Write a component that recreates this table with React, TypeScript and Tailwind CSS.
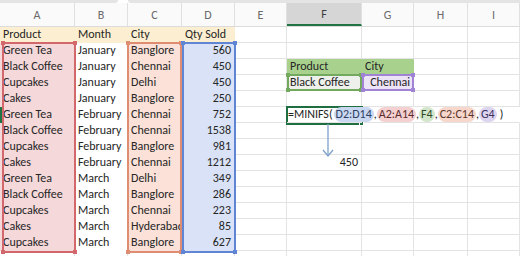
import React from 'react';

const letters = ['A', 'B', 'C', 'D', 'E', 'F', 'G', 'H', 'I'];

const data: (string | number)[][] = [
    ['Product', 'Month', 'City', 'Qty Sold'],
    ['Green Tea', 'January', 'Banglore', 560],
    ['Black Coffee', 'January', 'Chennai', 450],
    ['Cupcakes', 'January', 'Delhi', 450],
    ['Cakes', 'January', 'Banglore', 250],
    ['Green Tea', 'February', 'Chennai', 752],
    ['Black Coffee', 'February', 'Chennai', 1538],
    ['Cupcakes', 'February', 'Banglore', 981],
    ['Cakes', 'February', 'Chennai', 1212],
    ['Green Tea', 'March', 'Delhi', 349],
    ['Black Coffee', 'March', 'Banglore', 286],
    ['Cupcakes', 'March', 'Chennai', 223],
    ['Cakes', 'March', 'Hyderabad', 85],
    ['Cupcakes', 'March', 'Banglore', 627],
    ['', '', '', ''],
];

const gridCols = 'grid grid-cols-[75px_53px_54px_53px_52px_75px_52px_54px_52px]';

function cellFill(r: number, c: number) {
    if (r === 1 && c <= 3) return 'bg-[#fcefd1] border-transparent';
    if (r >= 2 && r <= 14) {
        if (c === 0) return 'bg-[#f5d8d9] border-transparent';
        if (c === 1) return 'bg-white border-transparent';
        if (c === 2) return 'bg-[#fbe1d8] border-transparent';
        if (c === 3) return 'bg-[#d9e2f6] border-transparent';
    }
    if (r === 3 && (c === 5 || c === 6)) return 'bg-[#a9d18e] border-transparent';
    if (r === 4 && c === 5) return 'bg-[#eef0ec] border-transparent';
    if (r === 4 && c === 6) return 'bg-[#ede3f6] border-transparent';
    if (r === 6 && c >= 6) return 'bg-white border-b-[#e3e3e3] border-r-transparent';
    return 'bg-white border-[#e3e3e3]';
}

function cellText(r: number, c: number): string {
    if (c <= 3) return String(data[r - 1][c]);
    if (r === 3 && c === 5) return 'Product';
    if (r === 3 && c === 6) return 'City';
    if (r === 4 && c === 5) return 'Black Coffee';
    if (r === 4 && c === 6) return 'Chennai';
    if (r === 9 && c === 5) return '450';
    return '';
}

function Pill({ children, color }: { children: React.ReactNode; color: string }) {
    return <span className={`rounded-full px-[2px] leading-[15px] ${color}`}>{children}</span>;
}

function Comma() {
    return <span className="w-[4px] text-center">,</span>;
}

function Formula() {
    return (
        <div className="relative z-20 flex items-center whitespace-nowrap text-[12px] leading-[15px] text-[#262626]">
            <span className="pr-[1px]">=MINIFS(</span>
            <Pill color="bg-[#c9d7f1] text-[#2f3f63]">D2:D14</Pill>
            <Comma />
            <Pill color="bg-[#f5d0d0] text-[#5a2b2b]">A2:A14</Pill>
            <Comma />
            <Pill color="bg-[#d3e6cc] text-[#2f4a2a]">F4</Pill>
            <Comma />
            <Pill color="bg-[#f7d6cb] text-[#5a352b]">C2:C14</Pill>
            <Comma />
            <Pill color="bg-[#ddd5f0] text-[#3c3160]">G4</Pill>
            <span className="pl-[3px]">)</span>
        </div>
    );
}

function Range({ box, color }: { box: string; color: string }) {
    return (
        <div className={`absolute pointer-events-none border-2 ${box} ${color}`}>
            <span className="absolute -left-[3px] -top-[3px] w-1 h-1 bg-current" />
            <span className="absolute -right-[3px] -top-[3px] w-1 h-1 bg-current" />
            <span className="absolute -left-[3px] -bottom-[3px] w-1 h-1 bg-current" />
            <span className="absolute -right-[3px] -bottom-[3px] w-1 h-1 bg-current" />
        </div>
    );
}

export default function App() {
    return (
        <div
            className="relative w-[520px] h-[256px] overflow-hidden bg-white"
            style={{ fontFamily: 'Carlito, Calibri, Lato, "Liberation Sans", sans-serif' }}
        >
            {/* bottoms of name box and formula bar */}
            <div className="flex h-[3px] gap-[10px]">
                <div className="w-[118px] bg-[#e4e4e4] rounded-br-[3px]" />
                <div className="flex-1 bg-[#e4e4e4] rounded-bl-[3px]" />
            </div>

            {/* column headers */}
            <div className={`${gridCols} h-6 bg-[#fafafa] border-b border-[#dcdcdc]`}>
                {letters.map((l, i) => (
                    <div
                        key={l}
                        className={`flex items-center justify-center text-[12px] border-r border-[#e0e0e0] ${
                            i === 5 ? 'bg-[#d6d6d6] text-[#3d3d3d] border-b-2 border-b-[#217346]' : 'text-[#6a6a6a]'
                        }`}
                    >
                        {l}
                    </div>
                ))}
            </div>

            {/* cells */}
            {data.map((_, ri) => {
                const r = ri + 1;
                return (
                    <div key={r} className={gridCols}>
                        {letters.map((_, c) => {
                            const right = (c === 3 && r >= 2) || (r === 9 && c === 5) || (r === 4 && c === 6);
                            if (r === 6 && c === 5) {
                                return (
                                    <div key={c} className="relative z-20 h-4 border-b border-[#e3e3e3] pl-[1px] overflow-visible">
                                        <Formula />
                                    </div>
                                );
                            }
                            return (
                                <div
                                    key={c}
                                    className={`h-4 border-r border-b px-[3px] text-[12px] leading-[15px] text-[#262626] whitespace-nowrap overflow-hidden ${
                                        right ? 'text-right' : ''
                                    } ${cellFill(r, c)}`}
                                >
                                    {cellText(r, c)}
                                </div>
                            );
                        })}
                    </div>
                );
            })}

            {/* range highlights */}
            <Range box="left-[2px] top-[42px] w-[74px] h-[211px]" color="border-[#d3686c] text-[#d3686c]" />
            <Range box="left-[127px] top-[42px] w-[55px] h-[211px]" color="border-[#de8d73] text-[#de8d73]" />
            <Range box="left-[182px] top-[42px] w-[54px] h-[211px]" color="border-[#5f85d4] text-[#5f85d4]" />
            <Range box="left-[287px] top-[74px] w-[75px] h-[17px]" color="border-[#72a95e] text-[#72a95e]" />
            <Range box="left-[362px] top-[74px] w-[52px] h-[17px]" color="border-[#a083d4] text-[#a083d4]" />

            {/* active cell F6 */}
            <div className="absolute left-[286px] top-[106px] w-[77px] h-[19px] border-2 border-[#1e6e42] pointer-events-none">
                <span className="absolute -right-[3px] -bottom-[3px] w-[5px] h-[5px] bg-[#1e6e42] border border-white" />
            </div>
            {/* row header selection marker */}
            <div className="absolute left-0 top-[107px] w-[2px] h-4 bg-[#217346]" />

            {/* arrow */}
            <svg className="absolute left-[319px] top-[123px]" width="18" height="36" viewBox="0 0 18 36">
                <line x1="9" y1="1" x2="9" y2="33" stroke="#7fa1cb" strokeWidth="1.3" />
                <polyline points="4,27 9,33 14,27" fill="none" stroke="#7fa1cb" strokeWidth="1.3" />
            </svg>
        </div>
    );
}
